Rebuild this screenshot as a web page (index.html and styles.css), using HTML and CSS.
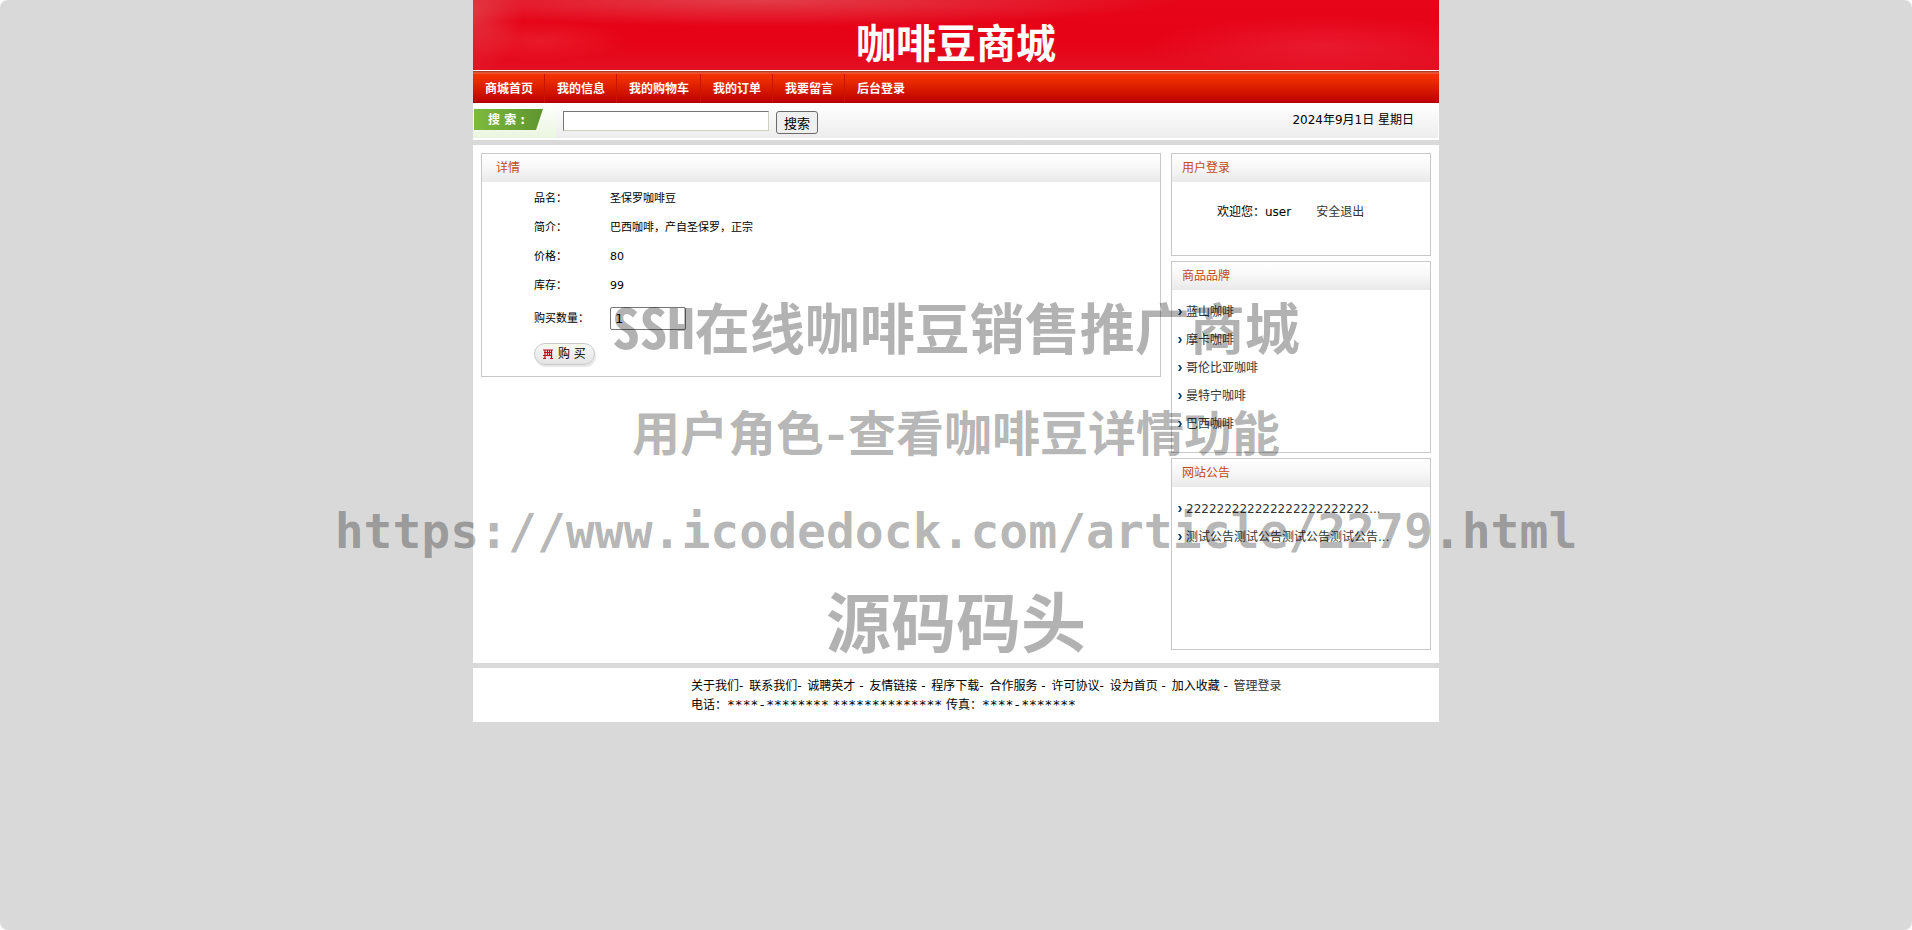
FILE: index.html
```html
<!DOCTYPE html>
<html lang="zh-CN">
<head>
<meta charset="utf-8">
<title>咖啡豆商城</title>
<link rel="stylesheet" href="styles.css">
</head>
<body>
<div class="page">
  <header class="banner"><h1 class="banner-title">咖啡豆商城</h1></header>
  <nav class="nav">
    <a class="nav-link" href="#">商城首页</a>
    <a class="nav-link" href="#">我的信息</a>
    <a class="nav-link" href="#">我的购物车</a>
    <a class="nav-link" href="#">我的订单</a>
    <a class="nav-link" href="#">我要留言</a>
    <a class="nav-link" href="#">后台登录</a>
  </nav>
  <form class="search">
    <div class="search-tag"><label class="search-label" for="keyword">搜 索 :</label></div>
    <input class="search-input" id="keyword" type="text">
    <button class="search-button" type="button">搜索</button>
    <span class="date">2024年9月1日 星期日</span>
  </form>
  <main class="main">
    <section class="panel">
      <h2 class="panel-head panel-head-wide">详情</h2>
      <form class="detail">
        <table class="detail-table">
          <tr><th>品名：</th><td>圣保罗咖啡豆</td></tr>
          <tr><th>简介：</th><td>巴西咖啡，产自圣保罗，正宗</td></tr>
          <tr><th>价格：</th><td>80</td></tr>
          <tr><th>库存：</th><td>99</td></tr>
          <tr class="quantity-row"><th><label for="quantity">购买数量：</label></th><td><input class="quantity" id="quantity" type="text" value="1"></td></tr>
        </table>
        <button class="buy" type="button">
          <svg class="buy-icon" viewBox="0 0 10 10" aria-hidden="true"><path d="M0 1h10M0 9.500h3M7 9.500h3M1 3.500h8M0 6.500h9M2 1v8M4.500 1v6M6.500 1v6M8.500 1v8" fill="none" stroke="#c00d12" stroke-width="1.200"/></svg>
          <span>购 买</span>
        </button>
      </form>
    </section>
    <aside class="side">
      <section class="panel">
        <h2 class="panel-head">用户登录</h2>
        <div class="login"><span>欢迎您：user</span><a class="link" href="#">安全退出</a></div>
      </section>
      <section class="panel">
        <h2 class="panel-head">商品品牌</h2>
        <ul class="list">
          <li><a class="link" href="#">蓝山咖啡</a></li>
          <li><a class="link" href="#">摩卡咖啡</a></li>
          <li><a class="link" href="#">哥伦比亚咖啡</a></li>
          <li><a class="link" href="#">曼特宁咖啡</a></li>
          <li><a class="link" href="#">巴西咖啡</a></li>
        </ul>
      </section>
      <section class="panel">
        <h2 class="panel-head">网站公告</h2>
        <ul class="list">
          <li><a class="link" href="#">222222222222222222222222...</a></li>
          <li><a class="link" href="#">测试公告测试公告测试公告测试公告...</a></li>
        </ul>
      </section>
    </aside>
  </main>
  <footer class="footer">
    <div>关于我们<span class="sep">- </span>联系我们<span class="sep">- </span>诚聘英才<span class="sep"> - </span>友情链接<span class="sep"> - </span>程序下载<span class="sep">- </span>合作服务<span class="sep"> - </span>许可协议<span class="sep">- </span>设为首页<span class="sep"> - </span>加入收藏<span class="sep"> - </span><a class="link" href="#">管理登录</a></div>
    <div>电话：<span class="digits">****-********</span> <span class="digits">**************</span> 传真：<span class="digits">****-*******</span></div>
  </footer>
</div>
<div class="watermark">
  <p class="mark mark-title">SSH在线咖啡豆销售推广商城</p>
  <p class="mark mark-sub">用户角色-查看咖啡豆详情功能</p>
  <p class="mark mark-url">https://www.icodedock.com/article/2279.html</p>
  <p class="mark mark-name">源码码头</p>
</div>
</body>
</html>
```
FILE: styles.css
```css
* { box-sizing: border-box; }
html { background: #fff; }
body {
  position: relative;
  margin: 0;
  min-height: 100vh;
  background: #d9d9d9;
  border-radius: 8px;
  font: 12px/20px "DejaVu Sans", "Noto Sans CJK SC", sans-serif;
  color: #000;
}
h1, h2, p, ul { margin: 0; padding: 0; font-size: inherit; }
a { text-decoration: none; }
.page { max-width: 966px; margin: 0 auto; }

.banner {
  display: flex;
  justify-content: center;
  height: 70px;
  padding-top: 12px;
  background:
    radial-gradient(ellipse 420px 26px at 30% 0, rgba(225, 75, 85, .8), transparent),
    radial-gradient(ellipse 50px 60px at 0 20%, rgba(225, 80, 85, .6), transparent),
    radial-gradient(ellipse 90px 20px at 7% 58%, rgba(235, 50, 60, .5), transparent),
    radial-gradient(ellipse 180px 30px at 88% 65%, rgba(235, 40, 60, .6), transparent),
    linear-gradient(#e60519 0, #e60217 60%, #e31022 100%);
}
.banner-title { font: bold 40px/58px "Noto Sans CJK SC", sans-serif; color: #fff; }

.nav {
  display: flex;
  height: 33px;
  padding-top: 4px;
  background: linear-gradient(#fff 1px, #a33 1px, #b8412f 2px, #f06a48 3px, #f53303 4px, #e52600 13px, #bd0000 32px, #9b0000 33px);
}
.nav-link {
  padding: 1px 12px 0;
  background: linear-gradient(#c81400, #c81400) right / 1px 100% no-repeat;
  line-height: 28px;
  font-weight: bold;
  color: #fff;
}
.nav-link:last-child { background: none; }

.search {
  display: flex;
  align-items: flex-start;
  height: 37px;
  border: solid #fff;
  border-width: 0 1px 2px 0;
  background: linear-gradient(#fff, #ededed);
}
.search-tag {
  width: 83px;
  height: 35px;
  padding: 6px 0 0 1px;
  background: linear-gradient(#fff, #ebf5df);
}
.search-label {
  display: block;
  width: 69px;
  height: 21px;
  padding-left: 14px;
  background: linear-gradient(90deg, #7dbb3d, #5f942f);
  clip-path: polygon(0 0, 100% 0, 62px 100%, 0 100%);
  color: #fff;
  font-weight: bold;
  line-height: 22px;
}
.search-input {
  width: 206px;
  height: 20px;
  margin: 8px 7px 0;
  padding: 1px 4px;
  border: 1px solid #767676;
  border-color: #767676 #d0d0c0 #d0d0c0 #767676;
  background: #fff;
}
.search-button {
  height: 23px;
  margin-top: 8px;
  padding: 0 7px;
  border: 1px solid #6b6b6b;
  border-radius: 3px;
  background: #efefef;
  font: 13px/20px "Noto Sans CJK SC", sans-serif;
  color: #000;
}
.date { margin: 7px 24px 0 auto; }

.main {
  display: flex;
  align-items: flex-start;
  gap: 10px;
  margin-top: 5px;
  padding: 8px 8px 13px;
  background: #fff;
}
.main > .panel { flex: 1; }
.side { display: flex; flex-direction: column; gap: 5px; width: 260px; }
.panel { border: 1px solid #c8c8c8; background: #fff; }
.panel-head {
  height: 28px;
  padding-left: 10px;
  background: linear-gradient(#fff, #f7f7f7 50%, #e9e9e9);
  font-weight: normal;
  line-height: 29px;
  color: #c04a1a;
}
.panel-head-wide { padding-left: 14px; }

.detail { padding: 2px 0 9px 52px; }
.detail-table { border-collapse: collapse; font-size: 11px; }
.detail-table th, .detail-table td { height: 29px; padding: 1px 0 0; font-weight: normal; text-align: left; }
.detail-table th { width: 76px; }
.detail-table .quantity-row th { height: 37px; }
.detail-table .quantity-row td { height: 37px; padding: 0; }
.quantity {
  display: block;
  width: 76px;
  height: 23px;
  padding: 1px 4px;
  border: 1px solid #767676;
  border-radius: 2px;
  font: 13px "DejaVu Sans", sans-serif;
}
.buy {
  display: flex;
  align-items: center;
  gap: 5px;
  height: 22px;
  margin-top: 6px;
  margin-bottom: 2px;
  padding: 0 8px;
  border: 1px solid #c9c9c9;
  border-radius: 11px;
  background: linear-gradient(#f8f8f8, #e4e4e4);
  box-shadow: 1px 2px 1px #e6e6e6;
  font: 12px/20px "DejaVu Sans", "Noto Sans CJK SC", sans-serif;
  color: #000;
}
.buy-icon { width: 10px; height: 10px; }

.link { color: #333; }
.login { display: flex; gap: 25px; height: 73px; padding: 20px 0 0 45px; }
.list { height: 162px; padding: 8px 0 0 6px; list-style: none; }
.list li { display: flex; align-items: center; gap: 4px; height: 28px; }
.list li::before {
  content: "";
  width: 4px;
  height: 6px;
  background: #0b3f73;
  clip-path: polygon(0 0, 50% 0, 100% 50%, 50% 100%, 0 100%, 50% 50%);
}

.footer {
  margin-top: 5px;
  padding: 9px 0 7px 218px;
  background: #fff;
  line-height: 19px;
  white-space: nowrap;
}
.sep { margin-right: 2px; white-space: pre; }
.digits { font-family: "DejaVu Sans Mono", monospace; font-size: 13px; line-height: 1; }

.watermark {
  position: absolute;
  inset: 0;
  display: flex;
  flex-direction: column;
  align-items: center;
  padding-top: 285px;
  overflow: hidden;
  color: rgba(0, 0, 0, .3);
  font-weight: bold;
  white-space: nowrap;
  pointer-events: none;
}
.mark { font-family: "Noto Sans Mono CJK SC", "Noto Sans CJK SC", sans-serif; }
.mark-title { font-size: 55px; line-height: 80px; }
.mark-sub { margin-top: 28px; font-size: 48px; line-height: 74px; }
.mark-url { margin-top: 32px; font-family: "DejaVu Sans Mono", monospace; font-size: 48px; line-height: 64px; }
.mark-name { margin-top: 14px; font-size: 65px; line-height: 84px; }
```
